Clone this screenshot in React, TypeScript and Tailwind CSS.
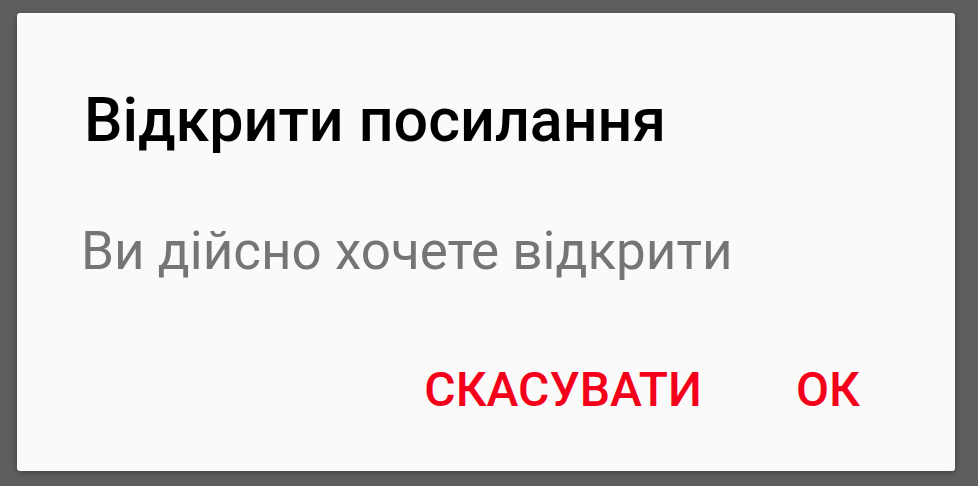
import React from "react";

export default function App() {
  return (
    <div
      className="w-[978px] h-[486px] bg-[#5e5e5e] pt-[13px] pl-[17px] overflow-hidden"
      style={{ fontFamily: "Roboto, 'Noto Sans', sans-serif" }}
    >
      <div className="w-[938px] h-[458px] bg-[#fafafa] rounded-[3px] flex flex-col shadow-[0_2px_6px_rgba(0,0,0,0.3)]">
        <div className="pl-[67px] pt-[77px] text-[61px] leading-[61px] font-medium text-black">
          Відкрити посилання
        </div>
        <div className="pl-[64px] pt-[74px] text-[53px] leading-[53px] text-[#757575]">
          Ви дійсно хочете відкрити
        </div>
        <div className="flex justify-end items-center pr-[95px] pt-[88px] gap-[94px] text-[48px] leading-[48px] font-medium text-[#f5001a]">
          <span>СКАСУВАТИ</span>
          <span>ОК</span>
        </div>
      </div>
    </div>
  );
}
